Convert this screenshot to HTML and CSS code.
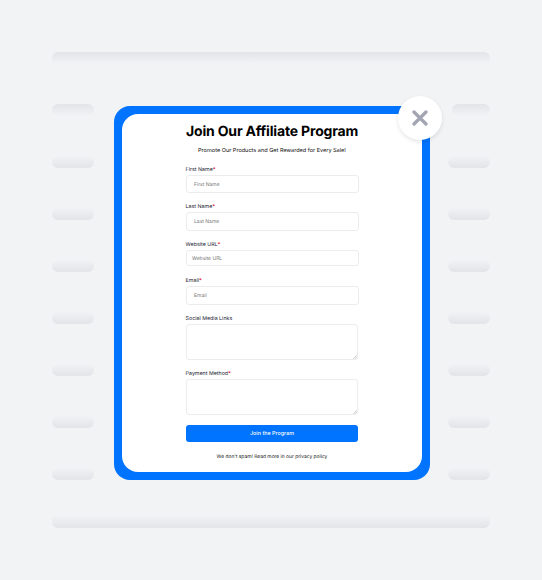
FILE: index.html
```html
<!DOCTYPE html>
<html lang="en">
<head>
<meta charset="utf-8">
<title>Join Our Affiliate Program</title>
<link rel="stylesheet" href="styles.css">
</head>
<body>
<div class="page">
  <div class="bar bar-down"></div>
  <div class="middle">
    <div class="side"><i class="bar bar-down"></i><i class="bar"></i><i class="bar"></i><i class="bar"></i><i class="bar"></i><i class="bar"></i><i class="bar"></i><i class="bar"></i></div>
    <main class="frame">
      <form class="card">
        <h1>Join Our Affiliate Program</h1>
        <p class="subtitle">Promote Our Products and Get Rewarded for Every Sale!</p>
        <div class="field first"><label>First Name<b>*</b></label><div class="input">First Name</div></div>
        <div class="field last"><label>Last Name<b>*</b></label><div class="input">Last Name</div></div>
        <div class="field website"><label>Website URL<b>*</b></label><div class="input">Website URL</div></div>
        <div class="field email"><label>Email<b>*</b></label><div class="input">Email</div></div>
        <div class="field social"><label>Social Media Links</label><div class="area"><svg viewBox="0 0 4 4"><path d="M.3 3.7 3.7.3M2 3.7 3.7 2"/></svg></div></div>
        <div class="field payment"><label>Payment Method<b>*</b></label><div class="area"><svg viewBox="0 0 4 4"><path d="M.3 3.7 3.7.3M2 3.7 3.7 2"/></svg></div></div>
        <div class="submit">Join the Program</div>
        <p class="privacy">We don't spam! Read more in our privacy policy</p>
      </form>
      <div class="close"><svg viewBox="0 0 16 16"><path d="M2 2 14 14M14 2 2 14"/></svg></div>
    </main>
    <div class="side side-right"><i class="bar bar-down"></i><i class="bar"></i><i class="bar"></i><i class="bar"></i><i class="bar"></i><i class="bar"></i><i class="bar"></i><i class="bar"></i></div>
  </div>
  <div class="bar"></div>
</div>
</body>
</html>
```
FILE: styles.css
```css
* { box-sizing: border-box; }
body {
  margin: 0;
  background: #f1f3f5;
  font-family: Inter, "Liberation Sans", sans-serif;
  text-rendering: geometricPrecision;
}
.page {
  width: 542px;
  height: 580px;
  padding: 52px;
  display: flex;
  flex-direction: column;
  justify-content: space-between;
}
.bar {
  display: block;
  height: 12px;
  border-radius: 6px;
  background: linear-gradient(to top, #e2e4e8, #f0f2f4);
}
.bar-down { background: linear-gradient(to bottom, #e2e4e8, #f1f3f5); }
.page > .bar { border-radius: 0 0 6px 6px; }
.page > .bar-down { border-radius: 6px 6px 0 0; }
.middle {
  height: 376px;
  margin-bottom: 16px;
  margin-top: 20px;
  display: grid;
  grid-template-columns: 42px 316px 42px;
  column-gap: 19px;
}
.side {
  display: flex;
  flex-direction: column;
  gap: 40px;
}
.side-right .bar-down { margin-left: 4px; }
.frame {
  position: relative;
  height: 374px;
  margin: 2px 0 0 1px;
  width: 316px;
  padding: 8px;
  border-radius: 16px;
  background: #0073ff;
}
.card {
  height: 358px;
  padding: 9px 63px 0 64px;
  border-radius: 16px;
  background: #fff;
  color: #111;
}
h1 {
  margin: 0;
  font-size: 14px;
  line-height: 18px;
  font-weight: 700;
  letter-spacing: -.17px;
  color: #000;
  white-space: nowrap;
}
p {
  margin: 0;
  text-align: center;
  white-space: nowrap;
}
.subtitle {
  height: 7px;
  margin-top: 6px;
  font-size: 5.55px;
  line-height: 8px;
  width: 172px;
}
label {
  display: block;
  height: 8px;
  margin-left: -.4px;
  font-size: 5.3px;
  line-height: 11px;
  color: #20202f;
}
label b { color: #e4001b; font-weight: 600; }
.input, .area {
  border: 1px solid #ebecee;
  border-radius: 3px;
}
.input {
  display: flex;
  align-items: center;
  padding-left: 7px;
  font-size: 5px;
  color: #777;
}
.first { margin-top: 11px; }
.first .input { height: 18px; margin-top: 2px; padding-top: 1px; }
.last { margin-top: 9px; }
.last .input { height: 19px; margin-top: 2px; }
.website { margin-top: 9px; }
.website .input { height: 16px; margin-top: 2px; padding: 1px 0 0 5px; }
.email { margin-top: 10px; }
.email .input { height: 19px; margin-top: 2px; }
.social { margin-top: 9px; }
.payment { margin-top: 9px; }
.area {
  width: 172px;
  height: 36px;
  margin-top: 2px;
  display: flex;
  align-items: flex-end;
  justify-content: flex-end;
}
.area svg { width: 4px; height: 4px; fill: none; stroke: #999; stroke-width: .5; }
.submit {
  width: 172px;
  height: 16.5px;
  margin-top: 10px;
  border-radius: 3px;
  background: #0073ff;
  color: #fff;
  font-size: 5.4px;
  font-weight: 500;
  line-height: 18px;
  text-align: center;
}
.privacy {
  margin-top: 11px;
  font-size: 4.93px;
  line-height: 8px;
  width: 172px;
}
.close {
  position: absolute;
  top: -10px;
  right: -12px;
  width: 44px;
  height: 44px;
  border-radius: 50%;
  background: #fff;
  box-shadow: 0 2px 4px #0000001a;
  display: flex;
  align-items: center;
  justify-content: center;
}
.close svg { width: 16px; height: 16px; fill: none; stroke: #a3a5b3; stroke-width: 3.3; stroke-linecap: round; }
```
